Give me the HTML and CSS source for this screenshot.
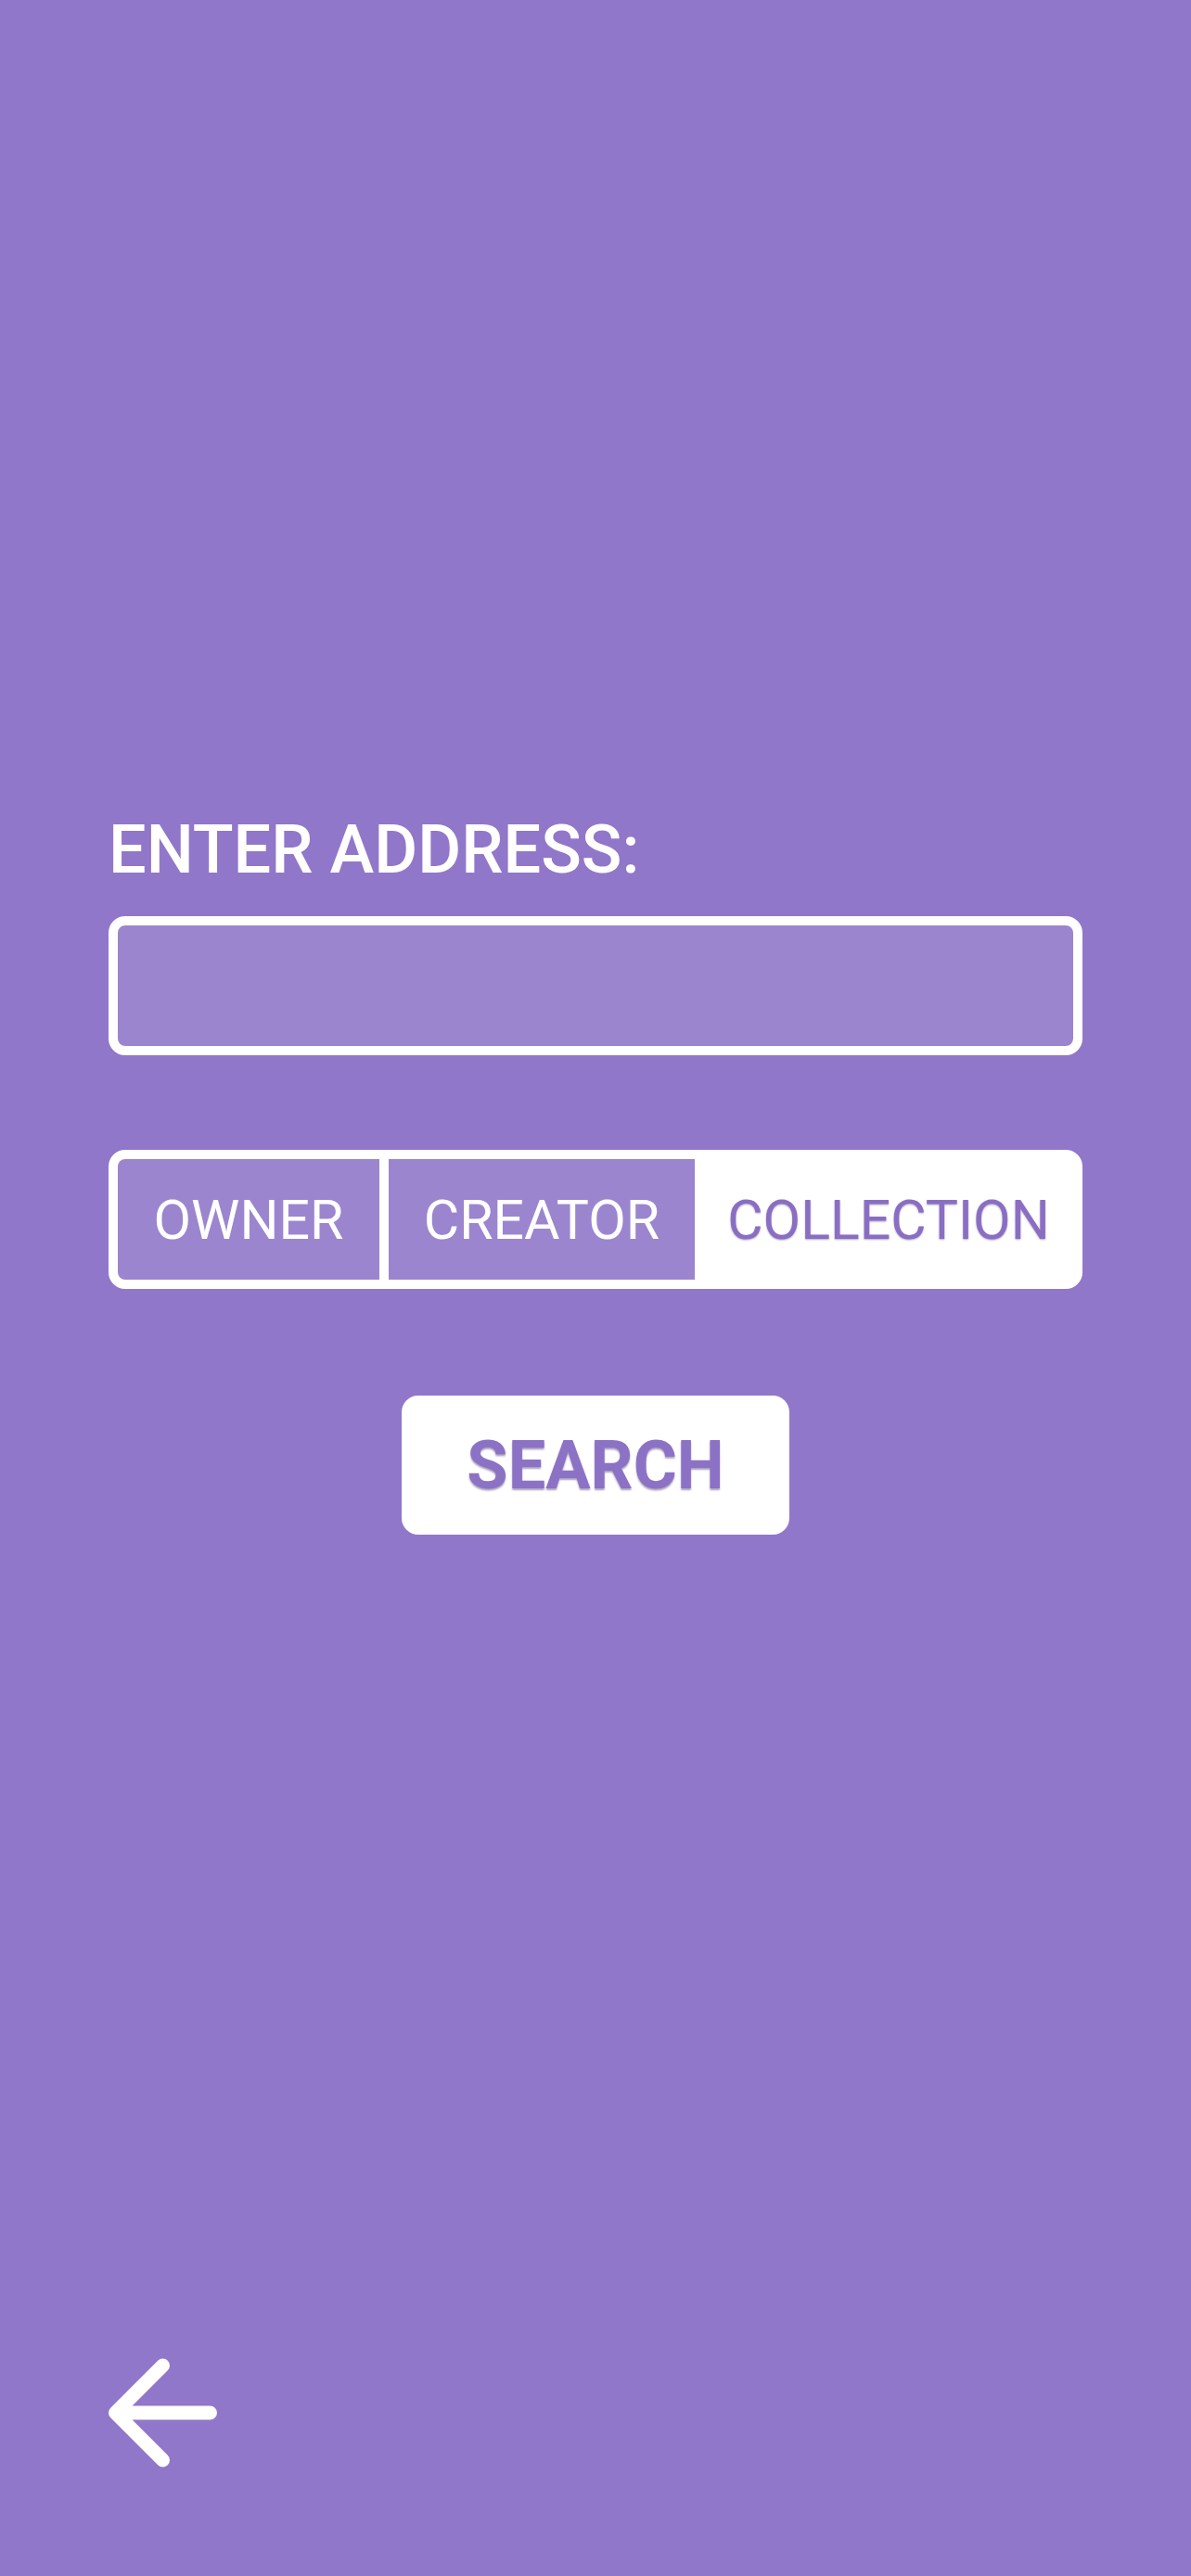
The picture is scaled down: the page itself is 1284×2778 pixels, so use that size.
FILE: index.html
```html
<!DOCTYPE html>
<html lang="en">
<head>
<meta charset="utf-8">
<title>Search</title>
<link rel="stylesheet" href="styles.css">
</head>
<body>
<div class="page">
  <main class="form">
    <label class="label" for="addr">ENTER ADDRESS:</label>
    <div class="input-wrap"><input id="addr" class="input" type="text"></div>
    <div class="segment">
      <div class="seg seg-owner">OWNER</div>
      <div class="seg seg-creator">CREATOR</div>
      <div class="seg seg-collection active">COLLECTION</div>
    </div>
    <div class="actions">
      <button class="search" type="button">SEARCH</button>
    </div>
  </main>
  <footer class="footer">
    <svg class="back" width="120" height="130" viewBox="0 0 120 130" aria-label="Back">
      <path d="M109.5 65 H7.5 M58.5 14 L7.5 65 L58.5 116" fill="none" stroke="#fff" stroke-width="15" stroke-linecap="round" stroke-linejoin="round"/>
    </svg>
  </footer>
</div>
</body>
</html>
```
FILE: styles.css
```css
html, body {
  margin: 0;
  padding: 0;
}
body {
  background: #9177c9;
  font-family: Roboto, "Liberation Sans", sans-serif;
  color: #fff;
}
.page {
  min-height: 2778px;
  display: flex;
  flex-direction: column;
  padding: 0 117px;
  box-sizing: border-box;
}
.form {
  padding-top: 881px;
  display: flex;
  flex-direction: column;
}
.label {
  display: block;
  font-size: 72px;
  font-weight: 500;
  line-height: 72px;
  height: 72px;
  color: #fff;
}
.input-wrap {
  margin-top: 35px;
  height: 150px;
  box-sizing: border-box;
  border: 10px solid #fff;
  border-radius: 18px;
  background: #9b85ce;
  overflow: hidden;
}
.input {
  width: 100%;
  height: 100%;
  border: 0;
  outline: none;
  background: transparent;
  font: 400 48px Roboto, sans-serif;
  color: #fff;
  padding: 0 24px;
  box-sizing: border-box;
}
.segment {
  margin-top: 102px;
  height: 150px;
  box-sizing: border-box;
  border: 10px solid #fff;
  border-radius: 18px;
  background: #fff;
  display: flex;
  gap: 10px;
}
.seg {
  display: flex;
  align-items: center;
  justify-content: center;
  font-size: 59px;
  font-weight: 400;
  color: #fff;
  background: #9b85ce;
}
.seg-owner {
  width: 282px;
  border-radius: 8px 0 0 8px;
}
.seg-creator {
  width: 330px;
}
.seg-collection {
  flex: 1;
}
.seg.active {
  background: #fff;
  color: #8a6ec4;
  text-shadow: 0 1px 2px rgba(40, 10, 90, 0.35);
}
.actions {
  margin-top: 115px;
  display: flex;
  justify-content: center;
}
.search {
  width: 418px;
  height: 150px;
  border: 0;
  border-radius: 18px;
  background: #fff;
  font-family: Roboto, "Liberation Sans", sans-serif;
  font-size: 72px;
  font-weight: 700;
  color: #8c72c5;
  text-shadow: 0 2px 2px rgba(40, 10, 90, 0.4);
  padding: 0;
}
.footer {
  margin-top: auto;
  padding-bottom: 111px;
  display: flex;
}
.back {
  display: block;
}
```
